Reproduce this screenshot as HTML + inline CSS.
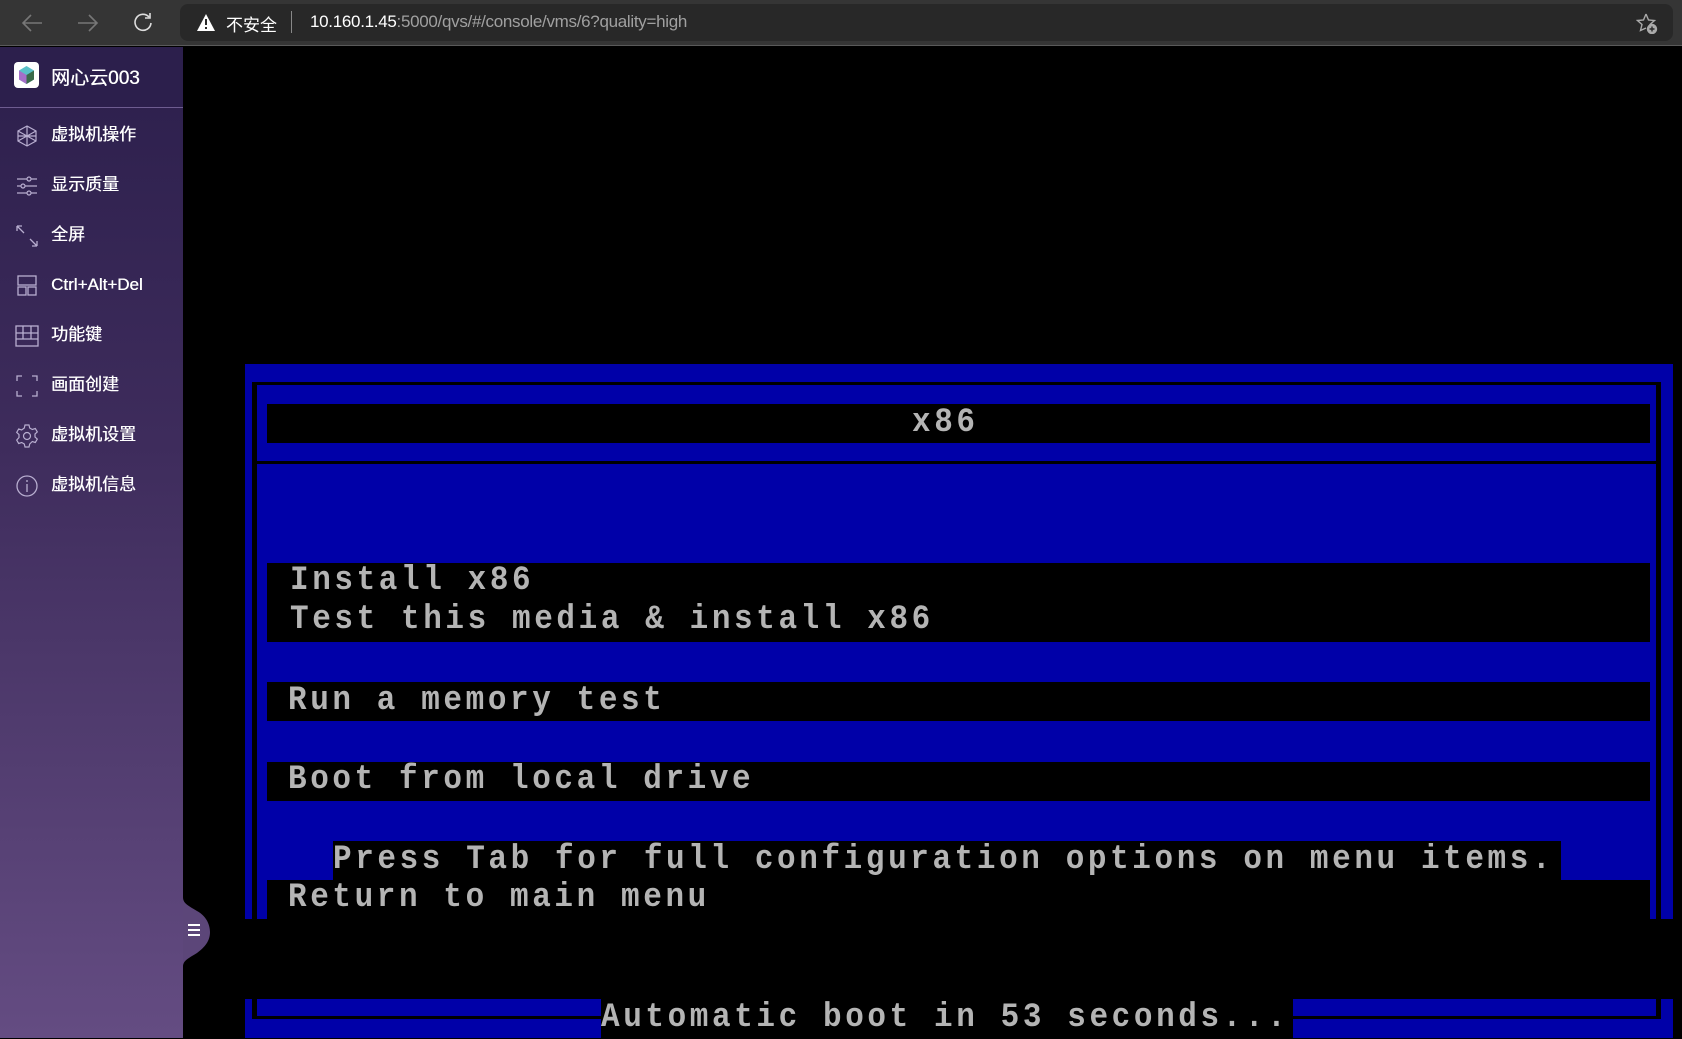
<!DOCTYPE html>
<html><head><meta charset="utf-8"><style>
*{margin:0;padding:0;box-sizing:border-box}
body{width:1682px;height:1038px;overflow:hidden;background:#000;font-family:"Liberation Sans","Noto Sans CJK SC",sans-serif;position:relative}
.top{position:absolute;left:0;top:0;width:1682px;height:46px;background:#353535;border-bottom:1px solid #5a5a5a}
.url{position:absolute;left:180px;top:4px;width:1493px;height:37px;background:#282828;border-radius:8px}
.side{position:absolute;left:0;top:47px;width:183px;height:991px;background:linear-gradient(#2c1f4c,#3e2c5c 40%,#644c82)}
.head{position:absolute;left:0;top:0;width:183px;height:61px;background:#2c1f4c;border-bottom:1px solid #6e5c90}
.item{position:absolute;left:0;width:183px;height:40px;color:#fff;font-size:17px;line-height:40px;text-shadow:0.4px 0 0 #fff}
.item span{position:absolute;left:51px}
.item svg{position:absolute;left:15px;top:9px}
.b{position:absolute;background:#0000a8}
.k{position:absolute;background:#000}
.t{position:absolute;font-family:"Liberation Mono",monospace;font-weight:bold;font-size:31px;color:#b4b4b4;letter-spacing:3.6px;white-space:pre;line-height:38px;transform:scaleY(1.12);transform-origin:0 50%}
</style></head><body>
<div class="top">
<svg style="position:absolute;left:20px;top:12px" width="24" height="22" viewBox="0 0 24 22" fill="none" stroke="#777" stroke-width="1.6"><path d="M22 11H3M11 3L3 11l8 8"/></svg>
<svg style="position:absolute;left:76px;top:12px" width="24" height="22" viewBox="0 0 24 22" fill="none" stroke="#777" stroke-width="1.6"><path d="M2 11h19M13 3l8 8-8 8"/></svg>
<svg style="position:absolute;left:132px;top:11px" width="22" height="22" viewBox="0 0 22 22" fill="none" stroke="#ddd" stroke-width="1.6"><path d="M17 6A8 8 0 1 0 19 12"/><path d="M18 2v5h-5"/></svg>
<div class="url">
<svg style="position:absolute;left:16px;top:9px" width="20" height="19" viewBox="0 0 20 19"><path d="M10 1L19 18H1z" fill="#fff"/><rect x="9" y="6" width="2" height="6" fill="#282828"/><rect x="9" y="14" width="2" height="2" fill="#282828"/></svg>
<span style="position:absolute;left:46px;top:7px;color:#fff;font-size:17px">不安全</span>
<span style="position:absolute;left:111px;top:7px;width:1px;height:22px;background:#888"></span>
<span style="position:absolute;left:130px;top:8px;font-size:17px;color:#fff;letter-spacing:-0.3px">10.160.1.45<span style="color:#a0a0a0">:5000/qvs/#/console/vms/6?quality=high</span></span>
<svg style="position:absolute;left:1456px;top:8px" width="24" height="22" viewBox="0 0 24 22" fill="none" stroke="#aaa" stroke-width="1.4"><path d="M10 2l2.5 6 6 .5-4.5 4 1 4M10 2L7.5 8l-6 .5 4.5 4-1.5 6L10 16"/><circle cx="16" cy="17" r="4.5" fill="#aaa"/><path d="M16 14.5v5M13.5 17h5" stroke="#282828"/></svg>
</div>
</div>
<div class="side">
<div class="head">
<svg style="position:absolute;left:14px;top:15px" width="25" height="26" viewBox="0 0 25 26"><rect width="25" height="26" rx="4" fill="#fff"/><path d="M12.5 4L20 8.5v9L12.5 22 5 17.5v-9z" fill="#5bc0c8"/><path d="M5 8.5l7.5 4.5V22L5 17.5z" fill="#a56ec8"/><path d="M12.5 13L20 8.5v9L12.5 22z" fill="#3a6a4a"/></svg>
<span style="position:absolute;left:51px;top:16px;color:#fff;font-size:19px;text-shadow:0.4px 0 0 #fff">网心云003</span>
</div>
<div class="item" style="top:68px"><svg width="24" height="24" viewBox="0 0 24 24" fill="none" stroke="#b8aed0" stroke-width="1.2"><path d="M12 2l9 5v10l-9 5-9-5V7z"/><path d="M3 7l18 10M21 7L3 17M12 2v20M3 12h18"/></svg><span>虚拟机操作</span></div>
<div class="item" style="top:118px"><svg width="24" height="24" viewBox="0 0 24 24" fill="none" stroke="#b8aed0" stroke-width="1.2"><path d="M2 5h20M2 12h20M2 19h20"/><circle cx="14" cy="5" r="2" fill="#3a2a58"/><circle cx="8" cy="12" r="2" fill="#3a2a58"/><circle cx="14" cy="19" r="2" fill="#3a2a58"/></svg><span>显示质量</span></div>
<div class="item" style="top:168px"><svg width="24" height="24" viewBox="0 0 24 24" fill="none" stroke="#b8aed0" stroke-width="1.3"><path d="M2 2l7 7M2 2v5M2 2h5M22 22l-7-7M22 22v-5M22 22h-5"/></svg><span>全屏</span></div>
<div class="item" style="top:218px"><svg width="24" height="24" viewBox="0 0 24 24" fill="none" stroke="#b8aed0" stroke-width="1.3"><rect x="3" y="2" width="18" height="9"/><rect x="3" y="13" width="8" height="8"/><rect x="13" y="13" width="8" height="8"/></svg><span>Ctrl+Alt+Del</span></div>
<div class="item" style="top:268px"><svg width="24" height="24" viewBox="0 0 24 24" fill="none" stroke="#b8aed0" stroke-width="1.3"><rect x="1" y="2" width="22" height="20"/><path d="M1 9h22M1 15h22M8 2v13M16 2v13"/></svg><span>功能键</span></div>
<div class="item" style="top:318px"><svg width="24" height="24" viewBox="0 0 24 24" fill="none" stroke="#b8aed0" stroke-width="1.3"><path d="M2 7V2h5M17 2h5v5M22 17v5h-5M7 22H2v-5"/></svg><span>画面创建</span></div>
<div class="item" style="top:368px"><svg width="24" height="24" viewBox="0 0 24 24" fill="none" stroke="#b8aed0" stroke-width="1.2"><circle cx="12" cy="12" r="3.5"/><path d="M10 1h4l.7 3 2.6 1.5 3-1 2 3.4-2.3 2.1v3l2.3 2.1-2 3.4-3-1L14.7 20l-.7 3h-4l-.7-3-2.6-1.5-3 1-2-3.4L4 13.5v-3L1.7 8.4l2-3.4 3 1L9.3 4z"/></svg><span>虚拟机设置</span></div>
<div class="item" style="top:418px"><svg width="24" height="24" viewBox="0 0 24 24" fill="none" stroke="#b8aed0" stroke-width="1.3"><circle cx="12" cy="12" r="10"/><path d="M12 10v8M12 6v2"/></svg><span>虚拟机信息</span></div>
</div>
<svg style="position:absolute;left:183px;top:897px" width="28" height="70" viewBox="0 0 28 70"><path d="M0 0C0 6 4 8 14 14 25 20 27 30 27 35 27 44 22 50 14 56 4 62 0 64 0 70z" fill="#5c4679"/><path d="M5 28h12M5 33h12M5 38h12" stroke="#fff" stroke-width="2"/></svg>

<div class="b" style="left:245px;top:364px;width:1428px;height:555px"></div>
<div class="k" style="left:252px;top:382px;width:1409px;height:537px"></div>
<div class="b" style="left:257px;top:385px;width:1399px;height:76px"></div>
<div class="b" style="left:257px;top:464px;width:1399px;height:455px"></div>
<div class="k" style="left:267px;top:404px;width:1383px;height:39px"></div>
<div class="t" style="left:912px;top:404px">x86</div>
<div class="k" style="left:267px;top:563px;width:1383px;height:79px"></div>
<div class="t" style="left:290px;top:562px">Install x86</div>
<div class="t" style="left:290px;top:601px">Test this media &amp; install x86</div>
<div class="k" style="left:267px;top:682px;width:1383px;height:39px"></div>
<div class="t" style="left:288px;top:682px">Run a memory test</div>
<div class="k" style="left:267px;top:762px;width:1383px;height:39px"></div>
<div class="t" style="left:288px;top:761px">Boot from local drive</div>
<div class="k" style="left:333px;top:841px;width:1228px;height:40px"></div>
<div class="t" style="left:333px;top:841px">Press Tab for full configuration options on menu items.</div>
<div class="k" style="left:267px;top:880px;width:1383px;height:39px"></div>
<div class="t" style="left:288px;top:879px">Return to main menu</div>
<div class="b" style="left:245px;top:999px;width:1428px;height:39px"></div>
<div class="k" style="left:252px;top:999px;width:1409px;height:20px"></div>
<div class="b" style="left:257px;top:999px;width:1399px;height:17px"></div>
<div class="k" style="left:601px;top:999px;width:692px;height:39px"></div>
<div class="t" style="left:601px;top:999px">Automatic boot in 53 seconds...</div>
</body></html>
